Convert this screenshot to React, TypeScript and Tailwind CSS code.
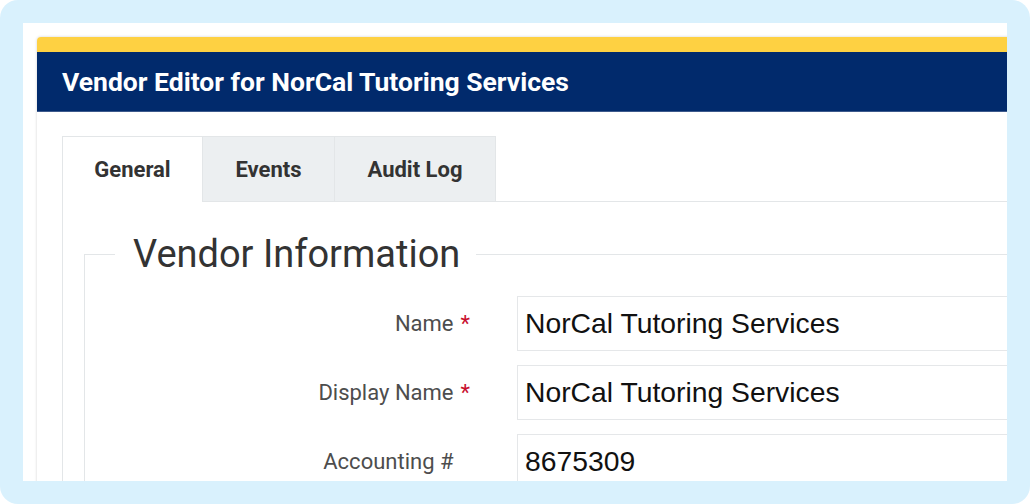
import React from "react";

const fields = [
  { label: "Name", required: true, value: "NorCal Tutoring Services" },
  { label: "Display Name", required: true, value: "NorCal Tutoring Services" },
  { label: "Accounting #", required: false, value: "8675309" },
];

const tabs = [
  { name: "General", width: "w-[141px]", active: true },
  { name: "Events", width: "w-[132px]", active: false },
  { name: "Audit Log", width: "w-[161px]", active: false },
];

export default function App() {
  return (
    <div className="w-[1030px] h-[504px] bg-white font-['Roboto',sans-serif]">
      <div className="w-full h-full rounded-[18px] bg-[#d9f1fd] p-[23px]">
        <div className="w-[984px] h-[458px] bg-white overflow-hidden pt-[14px] pl-[14px]">
          <div className="w-[1000px] h-[500px] bg-white rounded-t-[4px] shadow-[0_0_3px_rgba(0,0,0,0.18)] overflow-hidden">
            {/* header */}
            <div className="h-[15px] bg-[#fed142]" />
            <div className="h-[60px] bg-[#012a6c] flex items-center pl-[25px] border-b border-[#3d5a8c]">
              <h1 className="text-white text-[26.5px] font-bold leading-none pt-[2px]">
                Vendor Editor for NorCal Tutoring Services
              </h1>
            </div>

            {/* body */}
            <div className="pt-[24px] pl-[25px]">
              <div className="flex h-[66px]">
                {tabs.map((t) => (
                  <div
                    key={t.name}
                    className={`${t.width} flex items-center justify-center text-[22px] font-bold text-[#333] border-t border-r border-[#e3e6e8] ${
                      t.active
                        ? "bg-white border-l"
                        : "bg-[#eceff1] border-b"
                    }`}
                  >
                    {t.name}
                  </div>
                ))}
                <div className="flex-1 border-b border-[#e3e6e8]" />
              </div>

              <div className="border-l border-[#e3e6e8] pl-[21px] pt-[52px] h-[400px]">
                <div className="border-t border-[#e3e6e8] h-full relative">
                  {/* legend */}
                  <div className="absolute -top-[23px] left-[31px] bg-white pl-[18px] pr-[16px] text-[38px] leading-[44px] text-[#333]">
                    Vendor Information
                  </div>
                  <div className="border-l border-[#e3e6e8] h-full pt-[41px] flex flex-col gap-[14px]">
                    {fields.map((f) => (
                      <div key={f.label} className="flex items-center h-[55px]">
                        <div className="w-[385px] text-right text-[22px] text-[#4d4d4d]">
                          {f.label}
                          {f.required ? (
                            <span className="text-[#c8102e] ml-[7px]">*</span>
                          ) : (
                            <span className="ml-[7px] invisible">*</span>
                          )}
                        </div>
                        <div className="ml-[47px] flex-1 h-[55px] border border-[#e5e7e9] flex items-center pl-[7px] font-['Liberation_Sans',Arial,sans-serif] text-[28.3px] text-[#111]">
                          {f.value}
                        </div>
                      </div>
                    ))}
                  </div>
                </div>
              </div>
            </div>
          </div>
        </div>
      </div>
    </div>
  );
}
